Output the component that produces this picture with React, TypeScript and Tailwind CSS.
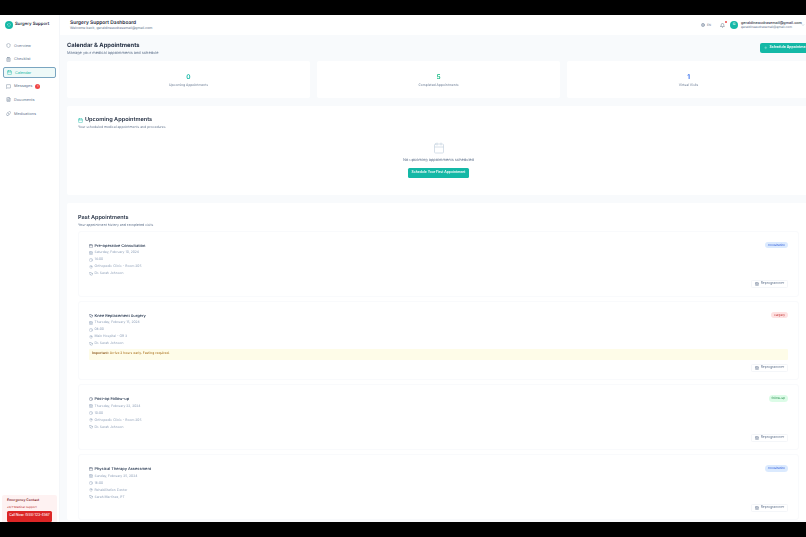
import {
  Bell, Calendar, CalendarDays, ClipboardList, Clock, FileText, Globe, Heart, MapPin,
  MessageSquare, Pill, Plus, Shield, Stethoscope, ChevronDown,
} from 'lucide-react';
import type { ReactNode } from 'react';

const navItems = [
  { label: 'Overview', icon: <Shield className="h-[5px] w-[5px]" /> },
  { label: 'Checklist', icon: <ClipboardList className="h-[5px] w-[5px]" /> },
  { label: 'Calendar', icon: <Calendar className="h-[5px] w-[5px]" />, active: true },
  { label: 'Messages', icon: <MessageSquare className="h-[5px] w-[5px]" />, badge: true },
  { label: 'Documents', icon: <FileText className="h-[5px] w-[5px]" /> },
  { label: 'Medications', icon: <Pill className="h-[5px] w-[5px]" /> },
];

type Appointment = {
  title: string;
  icon: ReactNode;
  date: string;
  time: string;
  place: string;
  doctor: string;
  tag: string;
  tagClass: string;
  note?: boolean;
};

const appointments: Appointment[] = [
  {
    title: 'Pre-operative Consultation',
    icon: <Calendar className="h-[4px] w-[4px]" />,
    date: 'Saturday, February 10, 2024',
    time: '14:00',
    place: 'Orthopedic Clinic - Room 205',
    doctor: 'Dr. Sarah Johnson',
    tag: 'consultation',
    tagClass: 'bg-[#dbeafe] text-[#1d4ed8]',
  },
  {
    title: 'Knee Replacement Surgery',
    icon: <Stethoscope className="h-[4px] w-[4px]" />,
    date: 'Thursday, February 15, 2024',
    time: '08:00',
    place: 'Main Hospital - OR 3',
    doctor: 'Dr. Sarah Johnson',
    tag: 'surgery',
    tagClass: 'bg-[#fee2e2] text-[#b91c1c]',
    note: true,
  },
  {
    title: 'Post-op Follow-up',
    icon: <Clock className="h-[4px] w-[4px]" />,
    date: 'Thursday, February 22, 2024',
    time: '10:00',
    place: 'Orthopedic Clinic - Room 205',
    doctor: 'Dr. Sarah Johnson',
    tag: 'follow-up',
    tagClass: 'bg-[#dcfce7] text-[#15803d]',
  },
  {
    title: 'Physical Therapy Assessment',
    icon: <Calendar className="h-[4px] w-[4px]" />,
    date: 'Sunday, February 25, 2024',
    time: '16:00',
    place: 'Rehabilitation Center',
    doctor: 'Sarah Martinez, PT',
    tag: 'consultation',
    tagClass: 'bg-[#dbeafe] text-[#1d4ed8]',
  },
];

const stats = [
  { value: '0', label: 'Upcoming Appointments', color: 'text-[#14b8a6]' },
  { value: '5', label: 'Completed Appointments', color: 'text-[#10b981]' },
  { value: '1', label: 'Virtual Visits', color: 'text-[#2563eb]' },
];

const AppointmentCard = ({ item }: { item: Appointment }) => {
  const rows = [
    { icon: <CalendarDays className="h-[4px] w-[4px]" />, text: item.date },
    { icon: <Clock className="h-[4px] w-[4px]" />, text: item.time },
    { icon: <MapPin className="h-[4px] w-[4px]" />, text: item.place },
    { icon: <Stethoscope className="h-[4px] w-[4px]" />, text: item.doctor },
  ];

  return (
    <div className="rounded-[3px] border-[0.5px] border-[#f9fafc] bg-white px-[10px] pt-[11px] pb-[7.5px]">
      <div className="flex items-start justify-between">
        <div>
          <div className="flex h-[6px] items-center gap-[1.5px] text-[3.9px] font-semibold text-slate-700">
            <span className="text-slate-600">{item.icon}</span>
            {item.title}
          </div>
          <div className="mt-[1.5px] flex flex-col gap-[2px]">
            {rows.map((row) => (
              <div key={row.text} className="flex h-[5px] items-center gap-[1.5px] text-[3.35px] text-slate-400">
                {row.icon}
                {row.text}
              </div>
            ))}
          </div>
        </div>
        <span className="-mt-[1px]">
          <span className={`block rounded-full px-[3px] py-[1px] text-[3px] ${item.tagClass}`}>{item.tag}</span>
        </span>
      </div>
      {item.note && (
        <div className="mt-[2.5px] flex h-[11px] items-center rounded-[1px] bg-[#fefce8] px-[3px] text-[3.35px] text-[#a16207]">
          <span className="mr-[1px] font-semibold text-[#854d0e]">Important:</span> Arrive 2 hours early. Fasting required.
        </div>
      )}
      <div className="mt-[4px] flex justify-end">
        <button className="flex h-[8px] w-[37px] items-center justify-center gap-[2px] rounded-[1.5px] border-[0.5px] border-[#f4f6f9] bg-white text-[3.35px] text-slate-500">
          <CalendarDays className="h-[4px] w-[4px]" />
          Reprogrammer
        </button>
      </div>
    </div>
  );
};

export default function App() {
  return (
    <div className="flex h-[537px] w-[806px] flex-col overflow-hidden bg-black py-[15px] font-['Inter',sans-serif] [text-rendering:geometricPrecision]">
      <div className="flex h-[507px] min-h-0 bg-white blur-[0.35px]">
        {/* Sidebar */}
        <aside className="flex w-[60px] shrink-0 flex-col border-r-[0.5px] border-[#f4f6f9] bg-white">
          <div className="flex h-[20px] items-center gap-[2.5px] px-[4.5px] text-[4.3px] font-semibold text-slate-800">
            <div className="flex h-[8px] w-[8px] items-center justify-center rounded-full bg-[#14b8a6] text-white">
              <Heart className="h-[4px] w-[4px]" />
            </div>
            Surgery Support
          </div>
          <nav className="mt-[5px] flex flex-col gap-[2.6px] px-[3px]">
            {navItems.map((item) => (
              <div
                key={item.label}
                className={`flex h-[11px] items-center gap-[3px] rounded-[2px] px-[3px] text-[3.8px] ${
                  item.active
                    ? 'border-[0.7px] border-[#7aa5c0] bg-[#eef9f8] text-[#14b8a6]'
                    : 'text-slate-500'
                }`}
              >
                {item.icon}
                {item.label}
                {item.badge && (
                  <span className="flex h-[5px] w-[5px] items-center justify-center rounded-full bg-[#ef4444] text-[3px] text-white">1</span>
                )}
              </div>
            ))}
          </nav>
          <div className="mt-auto px-[2px]">
            <div className="h-[27px] overflow-hidden rounded-t-[2px] bg-[#fef2f2] px-[5px] pt-[3px]">
              <div className="text-[3.4px] font-semibold text-[#7f1d1d]">Emergency Contact</div>
              <div className="mt-[2px] text-[2.9px] text-[#b91c1c]">24/7 Medical Support</div>
              <button className="mt-[2px] flex h-[11px] w-[45px] items-start justify-center rounded-[1.5px] bg-[#dc2626] pt-[1.5px] text-[3.3px] font-medium whitespace-nowrap text-white">
                Call Now: (555) 123-4567
              </button>
            </div>
          </div>
        </aside>

        <div className="flex min-w-0 flex-1 flex-col bg-slate-50">
          {/* Top bar */}
          <header className="flex h-[20px] shrink-0 items-center justify-between bg-white pr-[1px] pl-[10px]">
            <div className="pt-[1.5px]">
              <div className="text-[4.9px] font-semibold leading-[6px] text-slate-800">Surgery Support Dashboard</div>
              <div className="text-[3.5px] leading-[5px] text-slate-500">Welcome back, geraldineaudrasemail@gmail.com</div>
            </div>
            <div className="flex items-center">
              <Globe className="h-[4px] w-[4px] text-slate-500" />
              <span className="ml-[1.5px] text-[3px] text-slate-500">EN</span>
              <div className="relative ml-[9px]">
                <Bell className="h-[5px] w-[5px] text-slate-600" />
                <span className="absolute -top-[2px] -right-[2px] h-[2px] w-[2px] rounded-full bg-[#ef4444]" />
              </div>
              <div className="ml-[5px] flex h-[8px] w-[8px] items-center justify-center rounded-full bg-[#14b8a6] text-[3.5px] font-semibold text-white">
                G
              </div>
              <div className="ml-[3px] w-[56px]">
                <div className="text-[3.75px] font-medium leading-[4.5px] whitespace-nowrap text-slate-800">geraldineaudrasemail@gmail.com</div>
                <div className="text-[3.2px] leading-[4px] whitespace-nowrap text-slate-500">geraldineaudrasemail@gmail.com</div>
              </div>
              <ChevronDown className="ml-[4px] h-[4px] w-[4px] text-slate-400" />
            </div>
          </header>

          {/* Page */}
          <main className="min-h-0 w-[750px] overflow-hidden pt-[6px] pl-[7px]">
            <div className="flex items-start justify-between">
              <div>
                <h1 className="text-[5.8px] leading-[9px] font-bold text-slate-800">Calendar & Appointments</h1>
                <p className="text-[3.9px] leading-[6px] text-slate-500">Manage your medical appointments and schedule</p>
              </div>
              <button className="mt-[2px] flex h-[10px] w-[50px] shrink-0 items-center gap-[2px] overflow-hidden rounded-l-[2px] bg-[#14b8a6] pl-[4px] text-[3.6px] font-semibold whitespace-nowrap text-white">
                <Plus className="h-[3.5px] w-[3.5px] shrink-0" />
                Schedule Appointment
              </button>
            </div>

            <div className="mt-[5px] grid grid-cols-[243px_243px_243px] gap-[7px]">
              {stats.map((stat) => (
                <div key={stat.label} className="flex h-[37px] flex-col items-center rounded-[2px] bg-white pt-[10.5px]">
                  <div className={`text-[6.5px] leading-[10px] font-semibold ${stat.color}`}>{stat.value}</div>
                  <div className="mt-[1.5px] text-[3.35px] leading-[5px] text-slate-500">{stat.label}</div>
                </div>
              ))}
            </div>

            <section className="mt-[8px] flex h-[89px] w-[743px] flex-col rounded-[2px] bg-white px-[11px] pt-[10px]">
              <h2 className="flex items-center gap-[2px] text-[5.6px] leading-[8px] font-semibold text-slate-800">
                <Calendar className="h-[5px] w-[5px] text-[#14b8a6]" />
                Upcoming Appointments
              </h2>
              <p className="mt-[1px] text-[3.4px] leading-[5px] text-slate-500">Your scheduled medical appointments and procedures</p>
              <div className="mt-[12px] flex flex-col items-center">
                <Calendar className="h-[12px] w-[12px] text-slate-300" strokeWidth={1.5} />
                <p className="mt-[3px] text-[3.9px] leading-[5px] text-slate-500">No upcoming appointments scheduled</p>
                <button className="mt-[6px] h-[10px] w-[61px] rounded-[1.5px] bg-[#14b8a6] text-[3.4px] font-semibold whitespace-nowrap text-white">
                  Schedule Your First Appointment
                </button>
              </div>
            </section>

            <section className="mt-[8px] w-[743px] rounded-[2px] bg-white px-[11px] pt-[11px]">
              <h2 className="text-[5.5px] leading-[8px] font-semibold text-slate-800">Past Appointments</h2>
              <p className="mt-[0.5px] text-[3.45px] leading-[5px] text-slate-500">Your appointment history and completed visits</p>
              <div className="mt-[3px] flex flex-col gap-[4px]">
                {appointments.map((item) => (
                  <AppointmentCard key={item.title} item={item} />
                ))}
              </div>
            </section>
          </main>
        </div>
      </div>
    </div>
  );
}
